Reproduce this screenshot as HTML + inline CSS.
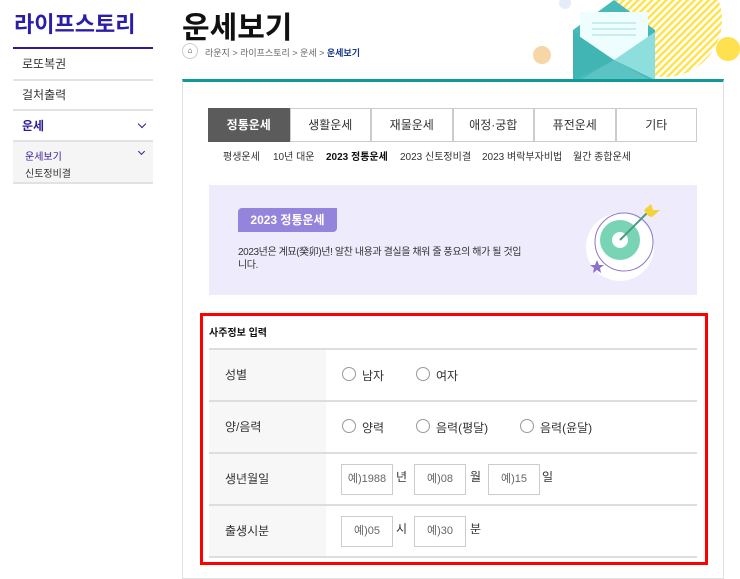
<!DOCTYPE html>
<html><head><meta charset="utf-8"><style>
*{margin:0;padding:0;box-sizing:border-box}
body{width:740px;height:565px;overflow:hidden;background:#fff;font-family:"Liberation Sans","Noto Sans CJK KR",sans-serif;color:#333;position:relative}
.a{position:absolute}
.item{position:absolute;left:13px;width:140px;font-size:12px;padding-left:9px}
.tab{position:absolute;top:108px;height:34px;width:81.5px;border:1px solid #ccc;font-size:12px;text-align:center;line-height:32px;color:#333;background:#fff}
.sub{position:absolute;top:148px;font-size:10px;color:#333}
.row{position:absolute;left:209px;width:488px;height:52px;border-bottom:2px solid #ddd}
.lab{position:absolute;left:0;top:0;width:117px;height:50px;background:#f7f7f7;font-size:12px;padding-left:16px;line-height:50px;color:#333}
.rad{position:absolute;width:14px;height:14px;border:1px solid #999;border-radius:50%;background:#fff}
.rt{position:absolute;font-size:12px;color:#333}
.inp{position:absolute;top:10px;width:52px;height:31px;border:1px solid #ccc;font-size:11px;color:#666;text-align:center;line-height:29px;background:#fff}
.chev{position:absolute;width:6px;height:6px;border-right:1.5px solid #2a1d9c;border-bottom:1.5px solid #2a1d9c;transform:rotate(45deg)}
</style></head><body>
<div class="a" style="left:14px;top:7px;font-size:22px;font-weight:bold;color:#2a1da8">라이프스토리</div>
<div class="a" style="left:13px;top:47px;width:140px;height:2px;background:#2a1d9c"></div>
<div class="item" style="top:55px">로또복권</div>
<div class="a" style="left:13px;top:79px;width:140px;height:2px;background:#e2e2e2"></div>
<div class="item" style="top:86px">걸처출력</div>
<div class="a" style="left:13px;top:109px;width:140px;height:2px;background:#e2e2e2"></div>
<div class="item" style="top:117px;color:#2a1d9c;font-weight:bold">운세</div>
<div class="chev" style="left:139px;top:121px"></div>
<div class="a" style="left:13px;top:140px;width:140px;height:44px;background:#f5f5f5;border-top:2px solid #e2e2e2;border-bottom:2px solid #e2e2e2"></div>
<div class="a" style="left:25px;top:148px;font-size:10px;color:#3a1a9a">운세보기</div>
<div class="chev" style="left:139px;top:149px;width:5px;height:5px"></div>
<div class="a" style="left:25px;top:165px;font-size:10px;color:#333">신토정비결</div>

<div class="a" style="left:182px;top:3px;font-size:30px;font-weight:bold;color:#111">운세보기</div>
<div class="a" style="left:182px;top:43px;width:16px;height:16px;border:1px solid #ccc;border-radius:50%;font-size:8px;text-align:center;line-height:14px">⌂</div>
<div class="a" style="left:205px;top:46px;font-size:9px;color:#666">라운지 &gt; 라이프스토리 &gt; 운세 &gt; <b style="color:#1a3a8a">운세보기</b></div>

<svg class="a" style="left:530px;top:0" width="215" height="82" viewBox="530 0 215 82">
<defs><pattern id="st" width="5" height="5" patternUnits="userSpaceOnUse" patternTransform="rotate(45)"><rect width="2.5" height="5" fill="#ffe34d"/></pattern></defs>
<circle cx="665" cy="20" r="57" fill="url(#st)"/>
<circle cx="728" cy="49" r="12" fill="#ffe04e"/>
<circle cx="542" cy="55" r="9" fill="#f6d6a6"/>
<circle cx="565" cy="3" r="6" fill="#e4ecfa"/>
<polygon points="573,30 614,0 655,30 655,80 573,80" fill="#48b9b9"/>
<rect x="580" y="12" width="68" height="48" fill="#eefdfd"/>
<line x1="592" y1="23" x2="636" y2="23" stroke="#a8dada"/><line x1="592" y1="29" x2="636" y2="29" stroke="#a8dada"/><line x1="592" y1="35" x2="636" y2="35" stroke="#a8dada"/>
<polygon points="573,32 614,60 573,80" fill="#41b4b4"/>
<polygon points="655,32 614,60 655,80" fill="#8fdede"/>
<polygon points="580,80 614,60 650,80" fill="#5cc3c3"/>
</svg>

<div class="a" style="left:182px;top:79px;width:542px;height:500px;border:1px solid #e0e0e0;border-top:3px solid #0f9a97"></div>

<div class="tab" style="left:208px;background:#5b5b5b;color:#fff;font-weight:bold;border-color:#5b5b5b">정통운세</div>
<div class="tab" style="left:289.5px">생활운세</div>
<div class="tab" style="left:371px">재물운세</div>
<div class="tab" style="left:452.5px">애정·궁합</div>
<div class="tab" style="left:534px">퓨전운세</div>
<div class="tab" style="left:615.5px">기타</div>
<div class="sub" style="left:223px">평생운세</div>
<div class="sub" style="left:273px">10년 대운</div>
<div class="sub" style="left:326px;font-weight:bold;color:#111">2023 정통운세</div>
<div class="sub" style="left:400px">2023 신토정비결</div>
<div class="sub" style="left:482px">2023 벼락부자비법</div>
<div class="sub" style="left:573px">월간 종합운세</div>

<div class="a" style="left:209px;top:185px;width:488px;height:110px;background:#edebfc"></div>
<div class="a" style="left:238px;top:208px;width:99px;height:24px;background:#9584dc;border-radius:4px 0 4px 0;color:#fff;font-size:12px;font-weight:bold;text-align:center;line-height:24px">2023 정통운세</div>
<div class="a" style="left:238px;top:246px;width:290px;font-size:10px;line-height:13px;color:#333;letter-spacing:-0.4px;word-break:break-all">2023년은 계묘(癸卯)년! 알찬 내용과 결실을 채워 줄 풍요의 해가 될 것입니다.</div>
<svg class="a" style="left:575px;top:198px" width="90" height="90" viewBox="575 198 90 90">
<circle cx="620" cy="247" r="34" fill="#fff"/>
<circle cx="624" cy="242" r="29" fill="none" stroke="#8c78cc" stroke-width="1"/>
<circle cx="620" cy="240" r="20" fill="#79d4b5"/>
<circle cx="620" cy="240" r="8" fill="#fff"/>
<line x1="620" y1="240" x2="648" y2="212" stroke="#4a9a80" stroke-width="2"/>
<polygon points="644,210 651,204 653,210 660,210 652,217 648,216" fill="#f5d23a"/>
<polygon points="597,260 599,265 604,265 600,268 601,273 597,270 593,273 594,268 590,265 595,265" fill="#8c70cc"/>
</svg>

<div class="a" style="left:200px;top:313px;width:508px;height:252px;border:3px solid #f00"></div>
<div class="a" style="left:209px;top:324px;font-size:10px;font-weight:bold;color:#111">사주정보 입력</div>
<div class="a" style="left:209px;top:348px;width:488px;height:2px;background:#ddd"></div>

<div class="row" style="top:350px"><div class="lab">성별</div>
<div class="rad" style="left:133px;top:17px"></div><div class="rt" style="left:153px;top:17px">남자</div>
<div class="rad" style="left:207px;top:17px"></div><div class="rt" style="left:227px;top:17px">여자</div></div>
<div class="row" style="top:402px"><div class="lab">양/음력</div>
<div class="rad" style="left:133px;top:17px"></div><div class="rt" style="left:153px;top:17px">양력</div>
<div class="rad" style="left:207px;top:17px"></div><div class="rt" style="left:227px;top:17px">음력(평달)</div>
<div class="rad" style="left:311px;top:17px"></div><div class="rt" style="left:331px;top:17px">음력(윤달)</div></div>
<div class="row" style="top:454px"><div class="lab">생년월일</div>
<div class="inp" style="left:132px">예)1988</div><div class="rt" style="left:187px;top:14px">년</div>
<div class="inp" style="left:205px">예)08</div><div class="rt" style="left:261px;top:14px">월</div>
<div class="inp" style="left:279px">예)15</div><div class="rt" style="left:333px;top:14px">일</div></div>
<div class="row" style="top:506px"><div class="lab">출생시분</div>
<div class="inp" style="left:132px">예)05</div><div class="rt" style="left:187px;top:14px">시</div>
<div class="inp" style="left:205px">예)30</div><div class="rt" style="left:261px;top:14px">분</div></div>
</body></html>
